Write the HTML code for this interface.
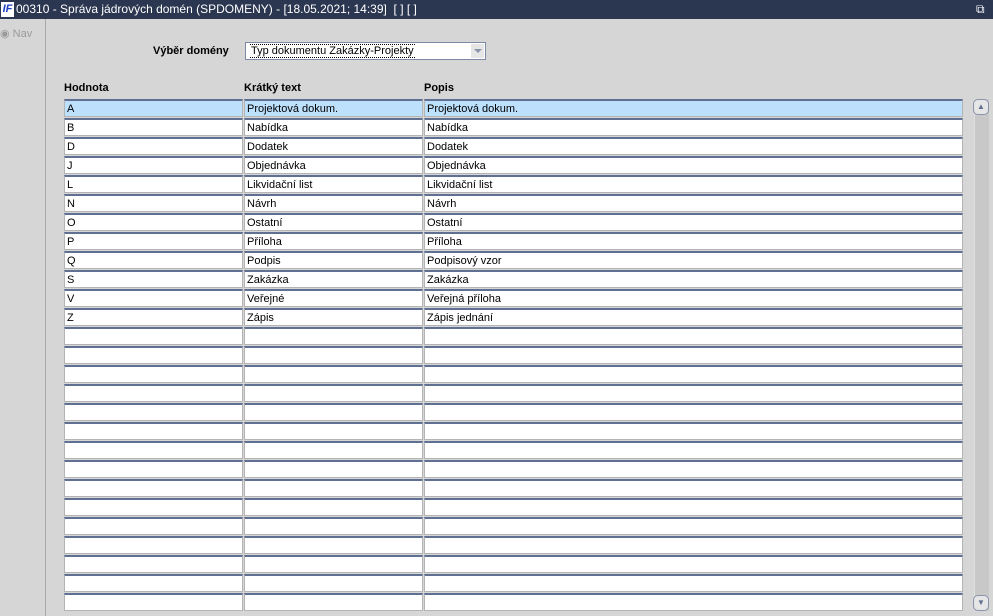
<!DOCTYPE html>
<html><head><meta charset="utf-8"><style>
*{margin:0;padding:0;box-sizing:border-box}
body{width:993px;height:616px;overflow:hidden;background:#d6d6d6;font-family:"Liberation Sans",Arial,sans-serif;position:relative}
.title{position:absolute;left:0;top:0;width:993px;height:19px;background:#2b3650;color:#fff;font-size:12px;line-height:19px;padding-left:16px}
.logo{position:absolute;left:1px;top:2px;width:13px;height:15px;background:#fff;color:#1a3cc0;font-weight:bold;font-style:italic;font-size:11px;line-height:15px;text-align:center}
.left{position:absolute;left:0;top:19px;width:46px;height:597px;background:#d6d6d6;border-right:1px solid #a9a9a9}
.nav{position:absolute;left:0;top:8px;font-size:11px;color:#9a9a9a}
.lbl{position:absolute;font-size:11px;font-weight:bold;color:#000}
.sel{position:absolute;left:245px;top:42px;width:241px;height:18px;background:#fff;border:1px solid #7d8aa5;font-size:11px;line-height:15px;padding-left:4px;padding-top:1px}
.sel span{border-top:1px dotted #000;border-bottom:1px dotted #000;padding:0 1px}
.arr{position:absolute;right:1px;top:1px;width:13px;height:14px;background:#e6e6e6}
.arr:after{content:"";position:absolute;left:3px;top:5px;border-left:4px solid transparent;border-right:4px solid transparent;border-top:4px solid #8a94aa}
.c{position:absolute;height:18px;background:#fff;border:1px solid #b4b4b4;border-top:2px solid #5f7092;font-size:11px;line-height:16px;padding-left:2px}
.hl{background:#bde0fc}
.sb{position:absolute;left:974px;top:99px;width:15px;height:512px;background:#c8c8c8;border-left:1px solid #e0e0e0}
.btn{position:absolute;left:973px;width:16px;height:16px;border:1px solid #8a94aa;border-radius:5px;background:#e6e6e6}
</style></head><body>
<div class="title"><div class="logo">IF</div>00310 - Správa jádrových domén (SPDOMENY) - [18.05.2021; 14:39] &nbsp;[ ] [ ]
<span style="position:absolute;left:976px;top:0">&#10697;</span></div>
<div class="left"><div class="nav">◉ Nav</div></div>
<div class="lbl" style="left:153px;top:45px">Výběr domény</div>
<div class="sel"><span>Typ dokumentu Zakázky-Projekty</span><div class="arr"></div></div>
<div class="lbl" style="left:64px;top:82px">Hodnota</div>
<div class="lbl" style="left:244px;top:82px">Krátký text</div>
<div class="lbl" style="left:424px;top:82px">Popis</div>
<div id="g"></div>
<div class="sb"></div>
<div class="btn" style="top:99px;font-size:8px;text-align:center;color:#5f7092;line-height:14px">▲</div>
<div class="btn" style="top:595px;font-size:8px;text-align:center;color:#5f7092;line-height:14px">▼</div>
<script>
var d=[["A","Projektová dokum.","Projektová dokum."],["B","Nabídka","Nabídka"],["D","Dodatek","Dodatek"],["J","Objednávka","Objednávka"],["L","Likvidační list","Likvidační list"],["N","Návrh","Návrh"],["O","Ostatní","Ostatní"],["P","Příloha","Příloha"],["Q","Podpis","Podpisový vzor"],["S","Zakázka","Zakázka"],["V","Veřejné","Veřejná příloha"],["Z","Zápis","Zápis jednání"]];
var h="",xs=[64,244,424],ws=[179,179,539];
for(var i=0;i<27;i++){var r=d[i]||["","",""];for(var j=0;j<3;j++){h+='<div class="c'+(i==0?' hl':'')+'" style="left:'+xs[j]+'px;top:'+(99+i*19)+'px;width:'+ws[j]+'px">'+r[j]+'</div>';}}
for(var k=0;k<13;k++){h+='<div style="position:absolute;left:978px;top:'+(270+k*10)+'px;width:2px;height:2px;background:#fff"></div><div style="position:absolute;left:983px;top:'+(265+k*10)+'px;width:2px;height:2px;background:#fff"></div>';}
document.getElementById("g").innerHTML=h;
</script>
</body></html>
